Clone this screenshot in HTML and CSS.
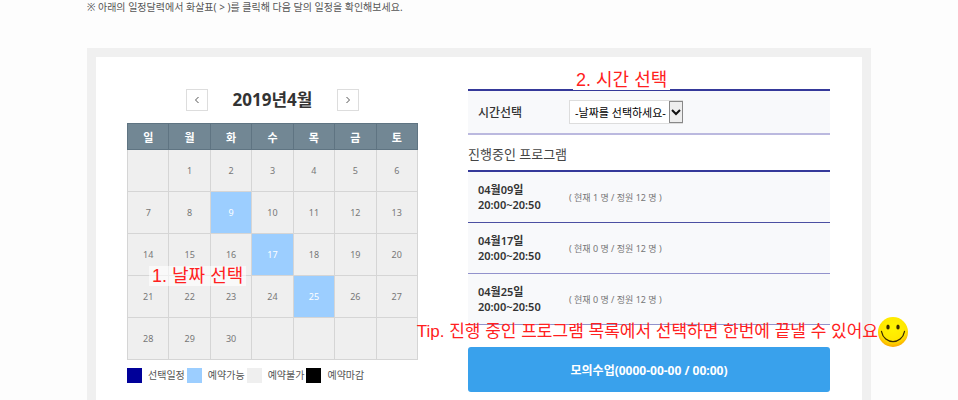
FILE: index.html
```html
<!DOCTYPE html>
<html lang="ko">
<head>
  <meta charset="UTF-8" />
  <meta name="viewport" content="width=device-width, initial-scale=1.0"/>
  <title>모의수업 예약</title>
  <link rel="stylesheet" href="styles.css">
</head>
<body>

  <main class="page">
    <p class="notice">※ 아래의 일정달력에서 화살표( &gt; )를 클릭해 다음 달의 일정을 확인해보세요.</p>

    <div class="panel">

      <!-- Calendar -->
      <section class="calendar">
        <div class="month">
          <button type="button" class="arrow" aria-label="이전 달">
            <svg width="6" height="8" viewBox="0 0 6 8"><path d="M4.5 1 L1.5 4 L4.5 7" fill="none" stroke="#555"/></svg>
          </button>
          <h2>2019년4월</h2>
          <button type="button" class="arrow" aria-label="다음 달">
            <svg width="6" height="8" viewBox="0 0 6 8"><path d="M1.5 1 L4.5 4 L1.5 7" fill="none" stroke="#555"/></svg>
          </button>
        </div>

        <div class="dates">
          <table>
            <thead>
              <tr><th>일</th><th>월</th><th>화</th><th>수</th><th>목</th><th>금</th><th>토</th></tr>
            </thead>
            <tbody>
              <tr><td></td><td>1</td><td>2</td><td>3</td><td>4</td><td>5</td><td>6</td></tr>
              <tr><td>7</td><td>8</td><td class="open"><button type="button">9</button></td><td>10</td><td>11</td><td>12</td><td>13</td></tr>
              <tr><td>14</td><td>15</td><td>16</td><td class="open"><button type="button">17</button></td><td>18</td><td>19</td><td>20</td></tr>
              <tr><td>21</td><td>22</td><td>23</td><td>24</td><td class="open"><button type="button">25</button></td><td>26</td><td>27</td></tr>
              <tr><td>28</td><td>29</td><td>30</td><td></td><td></td><td></td><td></td></tr>
            </tbody>
          </table>
          <span class="guide guide-date">1. 날짜 선택</span>
        </div>

        <ul class="legend">
          <li><i class="swatch selected"></i>선택일정</li>
          <li><i class="swatch available"></i>예약가능</li>
          <li><i class="swatch blocked"></i>예약불가</li>
          <li><i class="swatch closed"></i>예약마감</li>
        </ul>
      </section>

      <!-- Time and programs -->
      <section class="booking">
        <div class="time">
          <label for="time">시간선택</label>
          <div class="select">
            <select id="time">
              <option>-날짜를 선택하세요-</option>
            </select>
            <span class="drop"><svg width="10" height="7" viewBox="0 0 10 7"><path d="M1 1 L5 5 L9 1" fill="none" stroke="#111" stroke-width="2"/></svg></span>
          </div>
          <span class="guide guide-time">2. 시간 선택</span>
        </div>

        <h3>진행중인 프로그램</h3>
        <div class="programs">
          <ul>
            <li><strong>04월09일<br>20:00~20:50</strong><span>( 현재 1 명 / 정원 12 명 )</span></li>
            <li><strong>04월17일<br>20:00~20:50</strong><span>( 현재 0 명 / 정원 12 명 )</span></li>
            <li><strong>04월25일<br>20:00~20:50</strong><span>( 현재 0 명 / 정원 12 명 )</span></li>
          </ul>
          <div class="guide guide-tip">
            <span>Tip. 진행 중인 프로그램 목록에서 선택하면 한번에 끝낼 수 있어요</span>
            <svg width="30" height="30" viewBox="0 0 30 30">
              <defs>
                <radialGradient id="face" cx="50%" cy="35%" r="65%">
                  <stop offset="0" stop-color="#fff500"/>
                  <stop offset="0.7" stop-color="#ffe600"/>
                  <stop offset="1" stop-color="#fba900"/>
                </radialGradient>
              </defs>
              <circle cx="15" cy="15" r="15" fill="url(#face)"/>
              <ellipse cx="10" cy="10" rx="1.7" ry="2.6" fill="#3a2a00"/>
              <ellipse cx="20" cy="10" rx="1.7" ry="2.6" fill="#3a2a00"/>
              <path d="M3.5 14.5 C6 28 24 28 26.5 14.5" fill="none" stroke="#3a2a00" stroke-width="1.3" stroke-linecap="round"/>
            </svg>
          </div>
        </div>

        <button type="button" class="submit">모의수업(0000-00-00 / 00:00)</button>
      </section>

    </div>
  </main>

</body>
</html>
```

FILE: styles.css
```css
* {
  box-sizing: border-box;
}

body {
  margin: 0;
  font-family: "Noto Sans", "Noto Sans CJK KR", sans-serif;
  font-size: 10px;
  color: #555;
  background: #fdfdfd;
}

button, select {
  font-family: inherit;
  cursor: pointer;
}

h2, h3, p, ul {
  margin: 0;
  padding: 0;
}

ul {
  list-style: none;
}

.page {
  max-width: 784px;
  margin: 0 auto;
}

.notice {
  line-height: 14px;
  margin-bottom: 34px;
}

.panel {
  display: grid;
  grid-template-columns: 291fr 362fr;
  gap: 50px;
  padding: 32px 32px 40px 31px;
  border: 9px solid #f0f0f0;
  background: #fff;
}

.month {
  display: flex;
  justify-content: center;
  align-items: center;
  gap: 25px;
  height: 22px;
  margin-bottom: 12px;
}

.month h2 {
  font-size: 17px;
  line-height: 22px;
  color: #333;
}

.arrow {
  display: flex;
  align-items: center;
  justify-content: center;
  width: 22px;
  height: 22px;
  padding: 0;
  border: 1px solid #ddd;
  background: #fff;
}

.dates {
  position: relative;
}

table {
  width: 100%;
  table-layout: fixed;
  border-collapse: collapse;
  text-align: center;
}

th {
  height: 26px;
  padding: 0;
  font-size: 11px;
  color: #fff;
  background: #728794;
  border: 1px solid #5f7482;
}

td {
  height: 42px;
  padding: 0;
  font-size: 9px;
  color: #777;
  background: #efefef;
  border: 1px solid #d5d5d5;
}

td.open {
  background: #9cceff;
}

td button {
  width: 100%;
  height: 40px;
  padding: 0;
  border: none;
  font-size: 9px;
  color: #fff;
  background: none;
}

.legend {
  display: flex;
  gap: 2px;
  margin-top: 8px;
}

.legend li {
  display: flex;
  align-items: center;
  gap: 6px;
  line-height: 15px;
}

.swatch {
  width: 15px;
  height: 15px;
}

.selected { background: #000099; }
.available { background: #9cceff; }
.blocked { background: #efefef; }
.closed { background: #000; }

.time {
  position: relative;
  display: flex;
  align-items: center;
  height: 46px;
  padding: 0 10px;
  border-top: 2px solid #35399a;
  border-bottom: 2px solid #bbb9df;
  background: #f8f9fb;
}

.time label, .programs strong {
  width: 91px;
}

.time label {
  font-size: 12px;
  font-weight: 500;
  color: #333;
}

.select {
  position: relative;
}

.select select {
  appearance: none;
  height: 24px;
  padding: 0 16px 0 5px;
  border: 1px solid #ddd;
  border-radius: 0;
  font-size: 11px;
  color: #000;
  background: #fff;
}

.drop {
  position: absolute;
  top: 1px;
  right: 0;
  bottom: 1px;
  width: 14px;
  display: flex;
  align-items: center;
  justify-content: center;
  border: 1px solid #888;
  background: #eee;
  pointer-events: none;
}

h3 {
  padding: 9px 0 6px;
  font-size: 13px;
  font-weight: normal;
  line-height: 20px;
  color: #444;
}

.programs {
  position: relative;
  border-top: 2px solid #35399a;
}

.programs li {
  display: flex;
  align-items: center;
  height: 51px;
  padding: 0 10px;
  border-bottom: 1px solid #9292cc;
  background: #f8f9fb;
}

.programs li:first-child {
  border-color: #4b4fa2;
}

.programs strong {
  font-size: 11px;
  font-weight: 600;
  line-height: 15px;
  color: #333;
}

.programs li span {
  font-size: 9px;
  color: #777;
}

.submit {
  display: block;
  width: 100%;
  height: 45px;
  margin-top: 22px;
  border: none;
  border-radius: 3px;
  font-size: 12px;
  font-weight: bold;
  color: #fff;
  background: #39a1ec;
}

/* red step labels laid over the form */
.guide {
  position: absolute;
  font-family: "Liberation Sans", "Noto Sans CJK KR", sans-serif;
  font-size: 18px;
  line-height: 20px;
  color: #ff2020;
  white-space: nowrap;
}

.guide-date {
  left: 22px;
  top: 143px;
  padding: 0 3px;
  background: rgba(255, 255, 255, 0.6);
}

.guide-time {
  left: 105px;
  bottom: 43px;
  padding: 0 3px;
  background: #fff;
}

.guide-tip {
  right: -78px;
  bottom: -22px;
  display: flex;
  align-items: center;
  font-size: 17px;
}
```
